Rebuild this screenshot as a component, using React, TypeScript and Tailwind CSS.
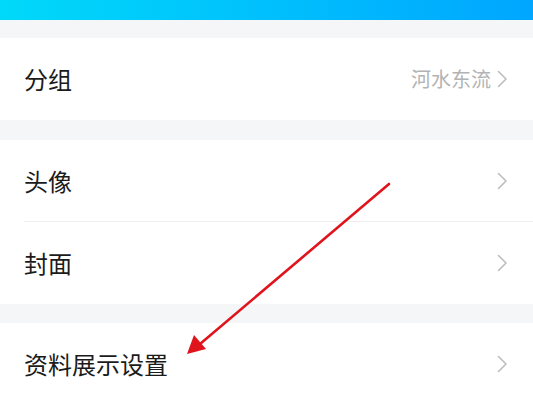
const FONT = { fontFamily: '"Noto Sans CJK SC", "Noto Sans", sans-serif' };

function Chevron({ className }: { className?: string }) {
  return (
    <svg width="11" height="18" viewBox="0 0 11 18" className={className}>
      <path d="M1.5 1.5 L9 9 L1.5 16.5" fill="none" stroke="currentColor" strokeWidth="1.6" strokeLinecap="round" strokeLinejoin="round" />
    </svg>
  );
}

function Row({ label, value, divider }: { label: string; value?: string; divider?: boolean }) {
  return (
    <div className="bg-white pl-6">
      <div className={`flex h-[82px] items-center justify-between pr-[25px] ${divider ? 'border-b border-[#eeeeee]' : ''}`}>
        <span className="text-[24px] text-[#1b1b1b]">{label}</span>
        <div className="flex items-center gap-1.5">
          {value && <span className="text-[20px] text-[#b3b3b3]">{value}</span>}
          <Chevron className="text-[#bdbdbd]" />
        </div>
      </div>
    </div>
  );
}

export default function App() {
  return (
    <div className="relative h-[400px] w-[533px] overflow-hidden bg-[#f5f6f8]" style={FONT}>
      <div className="h-5 bg-gradient-to-r from-[#00d9f9] to-[#00a6ff]" />
      <div className="h-[18px]" />
      <Row label="分组" value="河水东流" />
      <div className="h-[20px]" />
      <Row label="头像" divider />
      <Row label="封面" />
      <div className="h-[19px]" />
      <Row label="资料展示设置" />

      {/* annotation arrow */}
      <svg className="absolute left-0 top-0" width="533" height="400" viewBox="0 0 533 400">
        <line x1="389" y1="184" x2="200" y2="344" stroke="#e0141c" strokeWidth="2.6" strokeLinecap="round" />
        <polygon points="187,354 194,335 206,349" fill="#e0141c" />
      </svg>
    </div>
  );
}
